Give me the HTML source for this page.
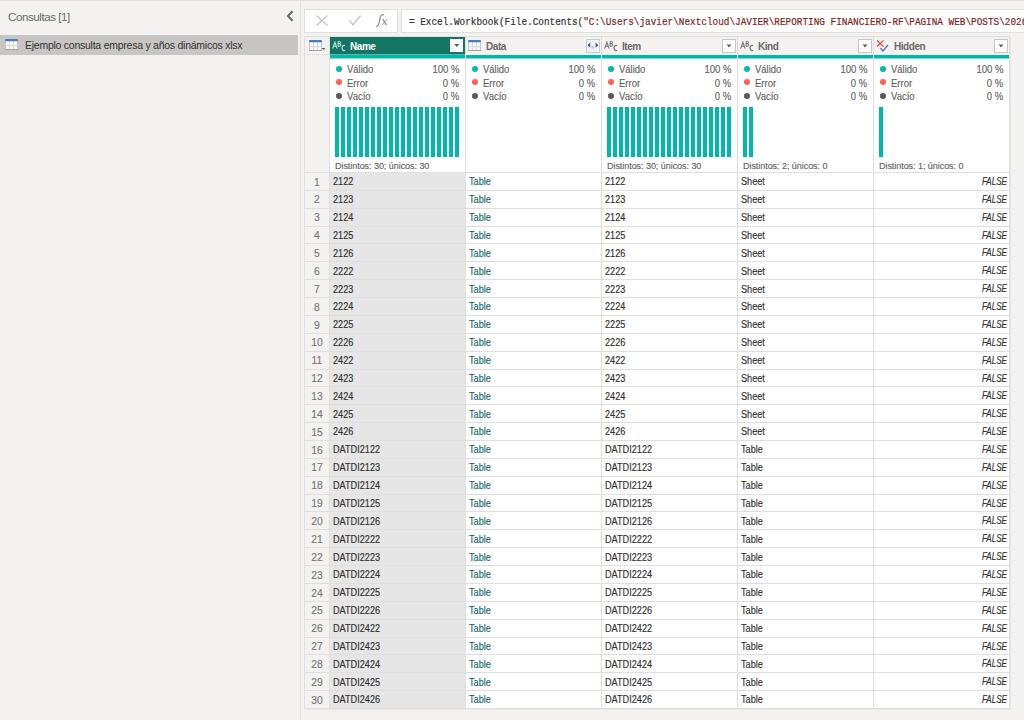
<!DOCTYPE html><html><head><meta charset="utf-8"><style>
*{margin:0;padding:0;box-sizing:border-box}
svg{display:block}
html,body{width:1024px;height:720px;overflow:hidden;background:#f3f2f1;font-family:"Liberation Sans",sans-serif;position:relative}
.a{position:absolute}
.t{position:absolute;white-space:nowrap;line-height:1}
.dd{position:absolute;top:39px;width:14px;height:14px;border:1px solid #c8c6c4;background:#fff}
.hdr{position:absolute;top:37px;height:18px;background:#f3f2f1}
.htxt{position:absolute;top:42px;font-size:10px;font-weight:bold;color:#6b6967;letter-spacing:-0.45px;line-height:1;white-space:nowrap}
.ptxt{position:absolute;font-size:10px;color:#605e5c;-webkit-text-stroke:0.12px currentColor;line-height:1;white-space:nowrap}
.dot{position:absolute;width:6px;height:6px;border-radius:50%}
.bar{position:absolute;top:107px;width:4px;height:50px;background:#01b8aa}
.cell{position:absolute;font-size:10px;line-height:1;white-space:nowrap;color:#323130;-webkit-text-stroke:0.15px currentColor;transform:scaleX(0.915);transform-origin:0 0}
.rn{position:absolute;left:305px;width:24px;text-align:center;font-size:11.5px;line-height:1;color:#797775;-webkit-text-stroke:0.15px currentColor;transform:scaleX(0.9);transform-origin:50% 0}
.fl{position:absolute;font-size:10.3px;line-height:1;white-space:nowrap;color:#323130;-webkit-text-stroke:0.18px currentColor;font-style:italic;transform:scaleX(0.78);transform-origin:100% 0}
</style></head><body>

<div class="a" style="left:0;top:0;width:1024px;height:1px;background:#e1dfdd"></div>
<div class="t" style="left:8px;top:11px;font-size:11.6px;color:#6b6967;letter-spacing:-0.45px">Consultas [1]</div>
<svg class="a" style="left:285px;top:10px" width="10" height="12" viewBox="0 0 10 12"><path d="M7.5 1.2L3 6l4.5 4.8" stroke="#666" stroke-width="2" fill="none"/></svg>
<div class="a" style="left:0;top:35px;width:298px;height:20px;background:#c8c6c4"></div>
<div class="a" style="left:5px;top:39px"><svg width="13" height="11" viewBox="0 0 13 11"><rect x="0.5" y="2" width="12" height="8.5" fill="#f7f7f7"/><path d="M0.5 2v8.5M12.5 2v8.5" stroke="#c6c6c6" stroke-width="1"/><path d="M4.5 2v8.5M8.5 2v8.5M0.5 6.5h12" stroke="#dadada" stroke-width="1"/><path d="M0 10.5h13" stroke="#a0a0a0"/><rect x="0" y="0" width="13" height="2.3" rx="1" fill="#4a7cbf"/></svg></div>
<div class="t" style="left:25px;top:40px;font-size:10.5px;color:#323130;letter-spacing:-0.25px">Ejemplo consulta empresa y años dinámicos xlsx</div>
<div class="a" style="left:300px;top:1px;width:1px;height:719px;background:#e1dfdd"></div>
<div class="a" style="left:304px;top:9px;width:94px;height:24px;background:#fff;border:1px solid #e1dfdd"></div>
<svg class="a" style="left:315px;top:14px" width="14" height="13" viewBox="0 0 14 13"><path d="M1.5 1.5l11 10M12.5 1.5l-11 10" stroke="#c8c6c4" stroke-width="1.3"/></svg>
<svg class="a" style="left:348px;top:14px" width="14" height="13" viewBox="0 0 14 13"><path d="M1.5 6.5l3.5 4.5 7.5-9.5" stroke="#c8c6c4" stroke-width="1.3" fill="none"/></svg>
<svg class="a" style="left:370px;top:10px" width="24" height="20" viewBox="0 0 24 20"><path d="M6.6 16.4C8.4 16.6 9.1 14.2 9.7 10.2C10.3 6.2 11 4.2 13.6 4.6" stroke="#8f8d8b" stroke-width="1.25" fill="none" stroke-linecap="round"/><path d="M13.2 9.6L16.2 14.6" stroke="#8f8d8b" stroke-width="1.3" stroke-linecap="round"/><path d="M16.6 9.2L12.2 14.8" stroke="#9a9896" stroke-width="0.9" stroke-linecap="round"/></svg>
<div class="a" style="left:401px;top:9px;width:640px;height:24px;background:#fff;border:1px solid #e1dfdd"></div>
<div class="t" style="left:408.5px;top:16.9px;-webkit-text-stroke:0.2px #323130;font-family:'Liberation Mono',monospace;font-size:11px;transform:scaleX(0.8515);transform-origin:0 0;color:#323130">= Excel.Workbook(File.Contents(<span style="color:#a31515">"C:\Users\javier\Nextcloud\JAVIER\REPORTING FINANCIERO-RF\PAGINA WEB\POSTS\2026</span></div>
<div class="a" style="left:304px;top:36px;width:706px;height:673px;background:#e1dfdd;box-shadow:1px 1px 0 #e8e6e4"></div>
<div class="a" style="left:305px;top:37px;width:24px;height:135px;background:#f3f2f1"></div>
<div class="a" style="left:305px;top:54px;width:24px;height:1px;background:#e1dfdd"></div>
<div class="a" style="left:309px;top:40px"><svg width="13" height="11" viewBox="0 0 13 11"><rect x="0.5" y="2" width="12" height="8.5" fill="#f7f7f7"/><path d="M0.5 2v8.5M12.5 2v8.5" stroke="#c6c6c6" stroke-width="1"/><path d="M4.5 2v8.5M8.5 2v8.5M0.5 6.5h12" stroke="#dadada" stroke-width="1"/><path d="M0 10.5h13" stroke="#a0a0a0"/><rect x="0" y="0" width="13" height="2.3" rx="1" fill="#4a7cbf"/></svg></div>
<svg class="a" style="left:321px;top:47px" width="5" height="4" viewBox="0 0 5 4"><path d="M0.5 1h4l-2 2z" fill="#605e5c"/></svg>
<div class="hdr" style="left:330px;width:135px;background:#137563"></div>
<div class="a" style="left:330px;top:54px;width:135px;height:1px;background:#62b3a6"></div>
<div class="a" style="left:330px;top:55px;width:135px;height:3px;background:#01b8aa"></div>
<div class="a" style="left:330px;top:58px;width:135px;height:1px;background:#80dbd4"></div>
<div class="a" style="left:330px;top:59px;width:135px;height:113px;background:#fff"></div>
<div class="a" style="left:332px;top:41px"><svg width="14" height="11" viewBox="0 0 14 11"><path d="M0.7 7.7L2.9 1.2L5.1 7.6M1.9 5.2h2" stroke="#cde6df" stroke-width="1.05" fill="none"/><path d="M6.1 5.4V0.4h1.3a1.15 1.15 0 0 1 0 2.3H6.1h1.5a1.3 1.3 0 0 1 0 2.6H6.1" stroke="#cde6df" stroke-width="1" fill="none"/><path d="M13.1 4.7A2.1 2.6 0 1 0 13.1 9.3" stroke="#cde6df" stroke-width="1.15" fill="none"/></svg></div>
<div class="htxt" style="left:350px;color:#fff">Name</div>
<div class="dd" style="left:450px;width:13px;height:13px;border:none"><svg width="13" height="13" viewBox="0 0 13 13" style="position:absolute;left:0;top:0"><path d="M4.2 5h5.2l-2.6 3z" fill="#605e5c"/></svg></div>
<div class="dot" style="left:336.2px;top:65.9px;background:#01b8aa"></div>
<div class="ptxt" style="left:347px;top:64.8px;transform:scaleX(0.95);transform-origin:0 0">Válido</div>
<div class="ptxt" style="right:565px;top:64.8px;transform:scaleX(0.95);transform-origin:100% 0">100 %</div>
<div class="dot" style="left:336.2px;top:79.3px;background:#fd625e"></div>
<div class="ptxt" style="left:347px;top:78.6px;transform:scaleX(0.95);transform-origin:0 0">Error</div>
<div class="ptxt" style="right:565px;top:78.6px;transform:scaleX(0.95);transform-origin:100% 0">0 %</div>
<div class="dot" style="left:336.2px;top:93.0px;background:#595959"></div>
<div class="ptxt" style="left:347px;top:92.4px;transform:scaleX(0.95);transform-origin:0 0">Vacío</div>
<div class="ptxt" style="right:565px;top:92.4px;transform:scaleX(0.95);transform-origin:100% 0">0 %</div>
<div class="bar" style="left:335px"></div>
<div class="bar" style="left:341px"></div>
<div class="bar" style="left:347px"></div>
<div class="bar" style="left:353px"></div>
<div class="bar" style="left:359px"></div>
<div class="bar" style="left:365px"></div>
<div class="bar" style="left:371px"></div>
<div class="bar" style="left:377px"></div>
<div class="bar" style="left:383px"></div>
<div class="bar" style="left:389px"></div>
<div class="bar" style="left:395px"></div>
<div class="bar" style="left:401px"></div>
<div class="bar" style="left:407px"></div>
<div class="bar" style="left:413px"></div>
<div class="bar" style="left:419px"></div>
<div class="bar" style="left:425px"></div>
<div class="bar" style="left:431px"></div>
<div class="bar" style="left:437px"></div>
<div class="bar" style="left:443px"></div>
<div class="bar" style="left:449px"></div>
<div class="bar" style="left:455px"></div>
<div class="ptxt" style="left:335px;top:161.5px;font-size:9px;letter-spacing:-0.05px">Distintos: 30; únicos: 30</div>
<div class="hdr" style="left:466px;width:135px"></div>
<div class="a" style="left:466px;top:55px;width:135px;height:3px;background:#01b8aa"></div>
<div class="a" style="left:466px;top:58px;width:135px;height:1px;background:#80dbd4"></div>
<div class="a" style="left:466px;top:59px;width:135px;height:113px;background:#fff"></div>
<div class="a" style="left:468px;top:40px"><svg width="13" height="11" viewBox="0 0 13 11"><rect x="0.5" y="2" width="12" height="8.5" fill="#f7f7f7"/><path d="M0.5 2v8.5M12.5 2v8.5" stroke="#c6c6c6" stroke-width="1"/><path d="M4.5 2v8.5M8.5 2v8.5M0.5 6.5h12" stroke="#dadada" stroke-width="1"/><path d="M0 10.5h13" stroke="#a0a0a0"/><rect x="0" y="0" width="13" height="2.3" rx="1" fill="#4a7cbf"/></svg></div>
<div class="htxt" style="left:486px;">Data</div>
<div class="dd" style="left:586px;border-color:#c6cbd1;background:#eef3f8"><svg width="12" height="12" viewBox="0 0 12 12" style="position:absolute;left:0;top:0"><path d="M0.5 5.2L3.2 2.6v5.2z M11.3 5.2L8.6 2.6v5.2z" fill="#555"/><rect x="4.4" y="6" width="2.8" height="2.6" fill="#c8c8c8"/></svg></div>
<div class="dot" style="left:472.2px;top:65.9px;background:#01b8aa"></div>
<div class="ptxt" style="left:483px;top:64.8px;transform:scaleX(0.95);transform-origin:0 0">Válido</div>
<div class="ptxt" style="right:429px;top:64.8px;transform:scaleX(0.95);transform-origin:100% 0">100 %</div>
<div class="dot" style="left:472.2px;top:79.3px;background:#fd625e"></div>
<div class="ptxt" style="left:483px;top:78.6px;transform:scaleX(0.95);transform-origin:0 0">Error</div>
<div class="ptxt" style="right:429px;top:78.6px;transform:scaleX(0.95);transform-origin:100% 0">0 %</div>
<div class="dot" style="left:472.2px;top:93.0px;background:#595959"></div>
<div class="ptxt" style="left:483px;top:92.4px;transform:scaleX(0.95);transform-origin:0 0">Vacío</div>
<div class="ptxt" style="right:429px;top:92.4px;transform:scaleX(0.95);transform-origin:100% 0">0 %</div>
<div class="hdr" style="left:602px;width:135px"></div>
<div class="a" style="left:602px;top:55px;width:135px;height:3px;background:#01b8aa"></div>
<div class="a" style="left:602px;top:58px;width:135px;height:1px;background:#80dbd4"></div>
<div class="a" style="left:602px;top:59px;width:135px;height:113px;background:#fff"></div>
<div class="a" style="left:604px;top:41px"><svg width="14" height="11" viewBox="0 0 14 11"><path d="M0.7 7.7L2.9 1.2L5.1 7.6M1.9 5.2h2" stroke="#707070" stroke-width="1.05" fill="none"/><path d="M6.1 5.4V0.4h1.3a1.15 1.15 0 0 1 0 2.3H6.1h1.5a1.3 1.3 0 0 1 0 2.6H6.1" stroke="#707070" stroke-width="1" fill="none"/><path d="M13.1 4.7A2.1 2.6 0 1 0 13.1 9.3" stroke="#707070" stroke-width="1.15" fill="none"/></svg></div>
<div class="htxt" style="left:622px;">Item</div>
<div class="dd" style="left:722px;border-color:#c8c6c4"><svg width="12" height="12" viewBox="0 0 12 12" style="position:absolute;left:0;top:0"><path d="M3.5 4.5h5l-2.5 3z" fill="#605e5c"/></svg></div>
<div class="dot" style="left:608.2px;top:65.9px;background:#01b8aa"></div>
<div class="ptxt" style="left:619px;top:64.8px;transform:scaleX(0.95);transform-origin:0 0">Válido</div>
<div class="ptxt" style="right:293px;top:64.8px;transform:scaleX(0.95);transform-origin:100% 0">100 %</div>
<div class="dot" style="left:608.2px;top:79.3px;background:#fd625e"></div>
<div class="ptxt" style="left:619px;top:78.6px;transform:scaleX(0.95);transform-origin:0 0">Error</div>
<div class="ptxt" style="right:293px;top:78.6px;transform:scaleX(0.95);transform-origin:100% 0">0 %</div>
<div class="dot" style="left:608.2px;top:93.0px;background:#595959"></div>
<div class="ptxt" style="left:619px;top:92.4px;transform:scaleX(0.95);transform-origin:0 0">Vacío</div>
<div class="ptxt" style="right:293px;top:92.4px;transform:scaleX(0.95);transform-origin:100% 0">0 %</div>
<div class="bar" style="left:607px"></div>
<div class="bar" style="left:613px"></div>
<div class="bar" style="left:619px"></div>
<div class="bar" style="left:625px"></div>
<div class="bar" style="left:631px"></div>
<div class="bar" style="left:637px"></div>
<div class="bar" style="left:643px"></div>
<div class="bar" style="left:649px"></div>
<div class="bar" style="left:655px"></div>
<div class="bar" style="left:661px"></div>
<div class="bar" style="left:667px"></div>
<div class="bar" style="left:673px"></div>
<div class="bar" style="left:679px"></div>
<div class="bar" style="left:685px"></div>
<div class="bar" style="left:691px"></div>
<div class="bar" style="left:697px"></div>
<div class="bar" style="left:703px"></div>
<div class="bar" style="left:709px"></div>
<div class="bar" style="left:715px"></div>
<div class="bar" style="left:721px"></div>
<div class="bar" style="left:727px"></div>
<div class="ptxt" style="left:607px;top:161.5px;font-size:9px;letter-spacing:-0.05px">Distintos: 30; únicos: 30</div>
<div class="hdr" style="left:738px;width:135px"></div>
<div class="a" style="left:738px;top:55px;width:135px;height:3px;background:#01b8aa"></div>
<div class="a" style="left:738px;top:58px;width:135px;height:1px;background:#80dbd4"></div>
<div class="a" style="left:738px;top:59px;width:135px;height:113px;background:#fff"></div>
<div class="a" style="left:740px;top:41px"><svg width="14" height="11" viewBox="0 0 14 11"><path d="M0.7 7.7L2.9 1.2L5.1 7.6M1.9 5.2h2" stroke="#707070" stroke-width="1.05" fill="none"/><path d="M6.1 5.4V0.4h1.3a1.15 1.15 0 0 1 0 2.3H6.1h1.5a1.3 1.3 0 0 1 0 2.6H6.1" stroke="#707070" stroke-width="1" fill="none"/><path d="M13.1 4.7A2.1 2.6 0 1 0 13.1 9.3" stroke="#707070" stroke-width="1.15" fill="none"/></svg></div>
<div class="htxt" style="left:758px;">Kind</div>
<div class="dd" style="left:858px;border-color:#c8c6c4"><svg width="12" height="12" viewBox="0 0 12 12" style="position:absolute;left:0;top:0"><path d="M3.5 4.5h5l-2.5 3z" fill="#605e5c"/></svg></div>
<div class="dot" style="left:744.2px;top:65.9px;background:#01b8aa"></div>
<div class="ptxt" style="left:755px;top:64.8px;transform:scaleX(0.95);transform-origin:0 0">Válido</div>
<div class="ptxt" style="right:157px;top:64.8px;transform:scaleX(0.95);transform-origin:100% 0">100 %</div>
<div class="dot" style="left:744.2px;top:79.3px;background:#fd625e"></div>
<div class="ptxt" style="left:755px;top:78.6px;transform:scaleX(0.95);transform-origin:0 0">Error</div>
<div class="ptxt" style="right:157px;top:78.6px;transform:scaleX(0.95);transform-origin:100% 0">0 %</div>
<div class="dot" style="left:744.2px;top:93.0px;background:#595959"></div>
<div class="ptxt" style="left:755px;top:92.4px;transform:scaleX(0.95);transform-origin:0 0">Vacío</div>
<div class="ptxt" style="right:157px;top:92.4px;transform:scaleX(0.95);transform-origin:100% 0">0 %</div>
<div class="bar" style="left:743px"></div>
<div class="bar" style="left:749px"></div>
<div class="ptxt" style="left:743px;top:161.5px;font-size:9px;letter-spacing:-0.05px">Distintos: 2; únicos: 0</div>
<div class="hdr" style="left:874px;width:135px"></div>
<div class="a" style="left:874px;top:55px;width:135px;height:3px;background:#01b8aa"></div>
<div class="a" style="left:874px;top:58px;width:135px;height:1px;background:#80dbd4"></div>
<div class="a" style="left:874px;top:59px;width:135px;height:113px;background:#fff"></div>
<div class="a" style="left:876px;top:40px"><svg width="13" height="12" viewBox="0 0 13 12"><path d="M1 0.5l6.5 6M7.5 0.5l-6.5 6" stroke="#d9573a" stroke-width="1.3"/><path d="M4.5 8l2.5 3 5-6" stroke="#4a7dbf" stroke-width="1.4" fill="none"/></svg></div>
<div class="htxt" style="left:894px;">Hidden</div>
<div class="dd" style="left:994px;border-color:#c8c6c4"><svg width="12" height="12" viewBox="0 0 12 12" style="position:absolute;left:0;top:0"><path d="M3.5 4.5h5l-2.5 3z" fill="#605e5c"/></svg></div>
<div class="dot" style="left:880.2px;top:65.9px;background:#01b8aa"></div>
<div class="ptxt" style="left:891px;top:64.8px;transform:scaleX(0.95);transform-origin:0 0">Válido</div>
<div class="ptxt" style="right:21px;top:64.8px;transform:scaleX(0.95);transform-origin:100% 0">100 %</div>
<div class="dot" style="left:880.2px;top:79.3px;background:#fd625e"></div>
<div class="ptxt" style="left:891px;top:78.6px;transform:scaleX(0.95);transform-origin:0 0">Error</div>
<div class="ptxt" style="right:21px;top:78.6px;transform:scaleX(0.95);transform-origin:100% 0">0 %</div>
<div class="dot" style="left:880.2px;top:93.0px;background:#595959"></div>
<div class="ptxt" style="left:891px;top:92.4px;transform:scaleX(0.95);transform-origin:0 0">Vacío</div>
<div class="ptxt" style="right:21px;top:92.4px;transform:scaleX(0.95);transform-origin:100% 0">0 %</div>
<div class="bar" style="left:879px"></div>
<div class="ptxt" style="left:879px;top:161.5px;font-size:9px;letter-spacing:-0.05px">Distintos: 1; únicos: 0</div>
<div class="a" style="left:305px;top:173.00px;width:24px;height:16.87px;background:#f3f2f1"></div>
<div class="rn" style="top:176.60px">1</div>
<div class="a" style="left:330px;top:173.00px;width:135px;height:16.87px;background:#e6e6e6"></div>
<div class="cell" style="left:333px;top:177.30px">2122</div>
<div class="a" style="left:466px;top:173.00px;width:135px;height:16.87px;background:#fff"></div>
<div class="cell" style="left:469px;top:177.30px;color:#17676b">Table</div>
<div class="a" style="left:602px;top:173.00px;width:135px;height:16.87px;background:#fff"></div>
<div class="cell" style="left:605px;top:177.30px">2122</div>
<div class="a" style="left:738px;top:173.00px;width:135px;height:16.87px;background:#fff"></div>
<div class="cell" style="left:741px;top:177.30px">Sheet</div>
<div class="a" style="left:874px;top:173.00px;width:135px;height:16.87px;background:#fff"></div>
<div class="fl" style="right:17px;top:177.00px">FALSE</div>
<div class="a" style="left:305px;top:190.87px;width:24px;height:16.87px;background:#f3f2f1"></div>
<div class="rn" style="top:194.47px">2</div>
<div class="a" style="left:330px;top:190.87px;width:135px;height:16.87px;background:#e6e6e6"></div>
<div class="cell" style="left:333px;top:195.17px">2123</div>
<div class="a" style="left:466px;top:190.87px;width:135px;height:16.87px;background:#fff"></div>
<div class="cell" style="left:469px;top:195.17px;color:#17676b">Table</div>
<div class="a" style="left:602px;top:190.87px;width:135px;height:16.87px;background:#fff"></div>
<div class="cell" style="left:605px;top:195.17px">2123</div>
<div class="a" style="left:738px;top:190.87px;width:135px;height:16.87px;background:#fff"></div>
<div class="cell" style="left:741px;top:195.17px">Sheet</div>
<div class="a" style="left:874px;top:190.87px;width:135px;height:16.87px;background:#fff"></div>
<div class="fl" style="right:17px;top:194.87px">FALSE</div>
<div class="a" style="left:305px;top:208.73px;width:24px;height:16.87px;background:#f3f2f1"></div>
<div class="rn" style="top:212.33px">3</div>
<div class="a" style="left:330px;top:208.73px;width:135px;height:16.87px;background:#e6e6e6"></div>
<div class="cell" style="left:333px;top:213.03px">2124</div>
<div class="a" style="left:466px;top:208.73px;width:135px;height:16.87px;background:#fff"></div>
<div class="cell" style="left:469px;top:213.03px;color:#17676b">Table</div>
<div class="a" style="left:602px;top:208.73px;width:135px;height:16.87px;background:#fff"></div>
<div class="cell" style="left:605px;top:213.03px">2124</div>
<div class="a" style="left:738px;top:208.73px;width:135px;height:16.87px;background:#fff"></div>
<div class="cell" style="left:741px;top:213.03px">Sheet</div>
<div class="a" style="left:874px;top:208.73px;width:135px;height:16.87px;background:#fff"></div>
<div class="fl" style="right:17px;top:212.73px">FALSE</div>
<div class="a" style="left:305px;top:226.60px;width:24px;height:16.87px;background:#f3f2f1"></div>
<div class="rn" style="top:230.20px">4</div>
<div class="a" style="left:330px;top:226.60px;width:135px;height:16.87px;background:#e6e6e6"></div>
<div class="cell" style="left:333px;top:230.90px">2125</div>
<div class="a" style="left:466px;top:226.60px;width:135px;height:16.87px;background:#fff"></div>
<div class="cell" style="left:469px;top:230.90px;color:#17676b">Table</div>
<div class="a" style="left:602px;top:226.60px;width:135px;height:16.87px;background:#fff"></div>
<div class="cell" style="left:605px;top:230.90px">2125</div>
<div class="a" style="left:738px;top:226.60px;width:135px;height:16.87px;background:#fff"></div>
<div class="cell" style="left:741px;top:230.90px">Sheet</div>
<div class="a" style="left:874px;top:226.60px;width:135px;height:16.87px;background:#fff"></div>
<div class="fl" style="right:17px;top:230.60px">FALSE</div>
<div class="a" style="left:305px;top:244.47px;width:24px;height:16.87px;background:#f3f2f1"></div>
<div class="rn" style="top:248.07px">5</div>
<div class="a" style="left:330px;top:244.47px;width:135px;height:16.87px;background:#e6e6e6"></div>
<div class="cell" style="left:333px;top:248.77px">2126</div>
<div class="a" style="left:466px;top:244.47px;width:135px;height:16.87px;background:#fff"></div>
<div class="cell" style="left:469px;top:248.77px;color:#17676b">Table</div>
<div class="a" style="left:602px;top:244.47px;width:135px;height:16.87px;background:#fff"></div>
<div class="cell" style="left:605px;top:248.77px">2126</div>
<div class="a" style="left:738px;top:244.47px;width:135px;height:16.87px;background:#fff"></div>
<div class="cell" style="left:741px;top:248.77px">Sheet</div>
<div class="a" style="left:874px;top:244.47px;width:135px;height:16.87px;background:#fff"></div>
<div class="fl" style="right:17px;top:248.47px">FALSE</div>
<div class="a" style="left:305px;top:262.33px;width:24px;height:16.87px;background:#f3f2f1"></div>
<div class="rn" style="top:265.93px">6</div>
<div class="a" style="left:330px;top:262.33px;width:135px;height:16.87px;background:#e6e6e6"></div>
<div class="cell" style="left:333px;top:266.63px">2222</div>
<div class="a" style="left:466px;top:262.33px;width:135px;height:16.87px;background:#fff"></div>
<div class="cell" style="left:469px;top:266.63px;color:#17676b">Table</div>
<div class="a" style="left:602px;top:262.33px;width:135px;height:16.87px;background:#fff"></div>
<div class="cell" style="left:605px;top:266.63px">2222</div>
<div class="a" style="left:738px;top:262.33px;width:135px;height:16.87px;background:#fff"></div>
<div class="cell" style="left:741px;top:266.63px">Sheet</div>
<div class="a" style="left:874px;top:262.33px;width:135px;height:16.87px;background:#fff"></div>
<div class="fl" style="right:17px;top:266.33px">FALSE</div>
<div class="a" style="left:305px;top:280.20px;width:24px;height:16.87px;background:#f3f2f1"></div>
<div class="rn" style="top:283.80px">7</div>
<div class="a" style="left:330px;top:280.20px;width:135px;height:16.87px;background:#e6e6e6"></div>
<div class="cell" style="left:333px;top:284.50px">2223</div>
<div class="a" style="left:466px;top:280.20px;width:135px;height:16.87px;background:#fff"></div>
<div class="cell" style="left:469px;top:284.50px;color:#17676b">Table</div>
<div class="a" style="left:602px;top:280.20px;width:135px;height:16.87px;background:#fff"></div>
<div class="cell" style="left:605px;top:284.50px">2223</div>
<div class="a" style="left:738px;top:280.20px;width:135px;height:16.87px;background:#fff"></div>
<div class="cell" style="left:741px;top:284.50px">Sheet</div>
<div class="a" style="left:874px;top:280.20px;width:135px;height:16.87px;background:#fff"></div>
<div class="fl" style="right:17px;top:284.20px">FALSE</div>
<div class="a" style="left:305px;top:298.07px;width:24px;height:16.87px;background:#f3f2f1"></div>
<div class="rn" style="top:301.67px">8</div>
<div class="a" style="left:330px;top:298.07px;width:135px;height:16.87px;background:#e6e6e6"></div>
<div class="cell" style="left:333px;top:302.37px">2224</div>
<div class="a" style="left:466px;top:298.07px;width:135px;height:16.87px;background:#fff"></div>
<div class="cell" style="left:469px;top:302.37px;color:#17676b">Table</div>
<div class="a" style="left:602px;top:298.07px;width:135px;height:16.87px;background:#fff"></div>
<div class="cell" style="left:605px;top:302.37px">2224</div>
<div class="a" style="left:738px;top:298.07px;width:135px;height:16.87px;background:#fff"></div>
<div class="cell" style="left:741px;top:302.37px">Sheet</div>
<div class="a" style="left:874px;top:298.07px;width:135px;height:16.87px;background:#fff"></div>
<div class="fl" style="right:17px;top:302.07px">FALSE</div>
<div class="a" style="left:305px;top:315.93px;width:24px;height:16.87px;background:#f3f2f1"></div>
<div class="rn" style="top:319.53px">9</div>
<div class="a" style="left:330px;top:315.93px;width:135px;height:16.87px;background:#e6e6e6"></div>
<div class="cell" style="left:333px;top:320.23px">2225</div>
<div class="a" style="left:466px;top:315.93px;width:135px;height:16.87px;background:#fff"></div>
<div class="cell" style="left:469px;top:320.23px;color:#17676b">Table</div>
<div class="a" style="left:602px;top:315.93px;width:135px;height:16.87px;background:#fff"></div>
<div class="cell" style="left:605px;top:320.23px">2225</div>
<div class="a" style="left:738px;top:315.93px;width:135px;height:16.87px;background:#fff"></div>
<div class="cell" style="left:741px;top:320.23px">Sheet</div>
<div class="a" style="left:874px;top:315.93px;width:135px;height:16.87px;background:#fff"></div>
<div class="fl" style="right:17px;top:319.93px">FALSE</div>
<div class="a" style="left:305px;top:333.80px;width:24px;height:16.87px;background:#f3f2f1"></div>
<div class="rn" style="top:337.40px">10</div>
<div class="a" style="left:330px;top:333.80px;width:135px;height:16.87px;background:#e6e6e6"></div>
<div class="cell" style="left:333px;top:338.10px">2226</div>
<div class="a" style="left:466px;top:333.80px;width:135px;height:16.87px;background:#fff"></div>
<div class="cell" style="left:469px;top:338.10px;color:#17676b">Table</div>
<div class="a" style="left:602px;top:333.80px;width:135px;height:16.87px;background:#fff"></div>
<div class="cell" style="left:605px;top:338.10px">2226</div>
<div class="a" style="left:738px;top:333.80px;width:135px;height:16.87px;background:#fff"></div>
<div class="cell" style="left:741px;top:338.10px">Sheet</div>
<div class="a" style="left:874px;top:333.80px;width:135px;height:16.87px;background:#fff"></div>
<div class="fl" style="right:17px;top:337.80px">FALSE</div>
<div class="a" style="left:305px;top:351.67px;width:24px;height:16.87px;background:#f3f2f1"></div>
<div class="rn" style="top:355.27px">11</div>
<div class="a" style="left:330px;top:351.67px;width:135px;height:16.87px;background:#e6e6e6"></div>
<div class="cell" style="left:333px;top:355.97px">2422</div>
<div class="a" style="left:466px;top:351.67px;width:135px;height:16.87px;background:#fff"></div>
<div class="cell" style="left:469px;top:355.97px;color:#17676b">Table</div>
<div class="a" style="left:602px;top:351.67px;width:135px;height:16.87px;background:#fff"></div>
<div class="cell" style="left:605px;top:355.97px">2422</div>
<div class="a" style="left:738px;top:351.67px;width:135px;height:16.87px;background:#fff"></div>
<div class="cell" style="left:741px;top:355.97px">Sheet</div>
<div class="a" style="left:874px;top:351.67px;width:135px;height:16.87px;background:#fff"></div>
<div class="fl" style="right:17px;top:355.67px">FALSE</div>
<div class="a" style="left:305px;top:369.53px;width:24px;height:16.87px;background:#f3f2f1"></div>
<div class="rn" style="top:373.13px">12</div>
<div class="a" style="left:330px;top:369.53px;width:135px;height:16.87px;background:#e6e6e6"></div>
<div class="cell" style="left:333px;top:373.83px">2423</div>
<div class="a" style="left:466px;top:369.53px;width:135px;height:16.87px;background:#fff"></div>
<div class="cell" style="left:469px;top:373.83px;color:#17676b">Table</div>
<div class="a" style="left:602px;top:369.53px;width:135px;height:16.87px;background:#fff"></div>
<div class="cell" style="left:605px;top:373.83px">2423</div>
<div class="a" style="left:738px;top:369.53px;width:135px;height:16.87px;background:#fff"></div>
<div class="cell" style="left:741px;top:373.83px">Sheet</div>
<div class="a" style="left:874px;top:369.53px;width:135px;height:16.87px;background:#fff"></div>
<div class="fl" style="right:17px;top:373.53px">FALSE</div>
<div class="a" style="left:305px;top:387.40px;width:24px;height:16.87px;background:#f3f2f1"></div>
<div class="rn" style="top:391.00px">13</div>
<div class="a" style="left:330px;top:387.40px;width:135px;height:16.87px;background:#e6e6e6"></div>
<div class="cell" style="left:333px;top:391.70px">2424</div>
<div class="a" style="left:466px;top:387.40px;width:135px;height:16.87px;background:#fff"></div>
<div class="cell" style="left:469px;top:391.70px;color:#17676b">Table</div>
<div class="a" style="left:602px;top:387.40px;width:135px;height:16.87px;background:#fff"></div>
<div class="cell" style="left:605px;top:391.70px">2424</div>
<div class="a" style="left:738px;top:387.40px;width:135px;height:16.87px;background:#fff"></div>
<div class="cell" style="left:741px;top:391.70px">Sheet</div>
<div class="a" style="left:874px;top:387.40px;width:135px;height:16.87px;background:#fff"></div>
<div class="fl" style="right:17px;top:391.40px">FALSE</div>
<div class="a" style="left:305px;top:405.27px;width:24px;height:16.87px;background:#f3f2f1"></div>
<div class="rn" style="top:408.87px">14</div>
<div class="a" style="left:330px;top:405.27px;width:135px;height:16.87px;background:#e6e6e6"></div>
<div class="cell" style="left:333px;top:409.57px">2425</div>
<div class="a" style="left:466px;top:405.27px;width:135px;height:16.87px;background:#fff"></div>
<div class="cell" style="left:469px;top:409.57px;color:#17676b">Table</div>
<div class="a" style="left:602px;top:405.27px;width:135px;height:16.87px;background:#fff"></div>
<div class="cell" style="left:605px;top:409.57px">2425</div>
<div class="a" style="left:738px;top:405.27px;width:135px;height:16.87px;background:#fff"></div>
<div class="cell" style="left:741px;top:409.57px">Sheet</div>
<div class="a" style="left:874px;top:405.27px;width:135px;height:16.87px;background:#fff"></div>
<div class="fl" style="right:17px;top:409.27px">FALSE</div>
<div class="a" style="left:305px;top:423.13px;width:24px;height:16.87px;background:#f3f2f1"></div>
<div class="rn" style="top:426.73px">15</div>
<div class="a" style="left:330px;top:423.13px;width:135px;height:16.87px;background:#e6e6e6"></div>
<div class="cell" style="left:333px;top:427.43px">2426</div>
<div class="a" style="left:466px;top:423.13px;width:135px;height:16.87px;background:#fff"></div>
<div class="cell" style="left:469px;top:427.43px;color:#17676b">Table</div>
<div class="a" style="left:602px;top:423.13px;width:135px;height:16.87px;background:#fff"></div>
<div class="cell" style="left:605px;top:427.43px">2426</div>
<div class="a" style="left:738px;top:423.13px;width:135px;height:16.87px;background:#fff"></div>
<div class="cell" style="left:741px;top:427.43px">Sheet</div>
<div class="a" style="left:874px;top:423.13px;width:135px;height:16.87px;background:#fff"></div>
<div class="fl" style="right:17px;top:427.13px">FALSE</div>
<div class="a" style="left:305px;top:441.00px;width:24px;height:16.87px;background:#f3f2f1"></div>
<div class="rn" style="top:444.60px">16</div>
<div class="a" style="left:330px;top:441.00px;width:135px;height:16.87px;background:#e6e6e6"></div>
<div class="cell" style="left:333px;top:445.30px">DATDI2122</div>
<div class="a" style="left:466px;top:441.00px;width:135px;height:16.87px;background:#fff"></div>
<div class="cell" style="left:469px;top:445.30px;color:#17676b">Table</div>
<div class="a" style="left:602px;top:441.00px;width:135px;height:16.87px;background:#fff"></div>
<div class="cell" style="left:605px;top:445.30px">DATDI2122</div>
<div class="a" style="left:738px;top:441.00px;width:135px;height:16.87px;background:#fff"></div>
<div class="cell" style="left:741px;top:445.30px">Table</div>
<div class="a" style="left:874px;top:441.00px;width:135px;height:16.87px;background:#fff"></div>
<div class="fl" style="right:17px;top:445.00px">FALSE</div>
<div class="a" style="left:305px;top:458.87px;width:24px;height:16.87px;background:#f3f2f1"></div>
<div class="rn" style="top:462.47px">17</div>
<div class="a" style="left:330px;top:458.87px;width:135px;height:16.87px;background:#e6e6e6"></div>
<div class="cell" style="left:333px;top:463.17px">DATDI2123</div>
<div class="a" style="left:466px;top:458.87px;width:135px;height:16.87px;background:#fff"></div>
<div class="cell" style="left:469px;top:463.17px;color:#17676b">Table</div>
<div class="a" style="left:602px;top:458.87px;width:135px;height:16.87px;background:#fff"></div>
<div class="cell" style="left:605px;top:463.17px">DATDI2123</div>
<div class="a" style="left:738px;top:458.87px;width:135px;height:16.87px;background:#fff"></div>
<div class="cell" style="left:741px;top:463.17px">Table</div>
<div class="a" style="left:874px;top:458.87px;width:135px;height:16.87px;background:#fff"></div>
<div class="fl" style="right:17px;top:462.87px">FALSE</div>
<div class="a" style="left:305px;top:476.73px;width:24px;height:16.87px;background:#f3f2f1"></div>
<div class="rn" style="top:480.33px">18</div>
<div class="a" style="left:330px;top:476.73px;width:135px;height:16.87px;background:#e6e6e6"></div>
<div class="cell" style="left:333px;top:481.03px">DATDI2124</div>
<div class="a" style="left:466px;top:476.73px;width:135px;height:16.87px;background:#fff"></div>
<div class="cell" style="left:469px;top:481.03px;color:#17676b">Table</div>
<div class="a" style="left:602px;top:476.73px;width:135px;height:16.87px;background:#fff"></div>
<div class="cell" style="left:605px;top:481.03px">DATDI2124</div>
<div class="a" style="left:738px;top:476.73px;width:135px;height:16.87px;background:#fff"></div>
<div class="cell" style="left:741px;top:481.03px">Table</div>
<div class="a" style="left:874px;top:476.73px;width:135px;height:16.87px;background:#fff"></div>
<div class="fl" style="right:17px;top:480.73px">FALSE</div>
<div class="a" style="left:305px;top:494.60px;width:24px;height:16.87px;background:#f3f2f1"></div>
<div class="rn" style="top:498.20px">19</div>
<div class="a" style="left:330px;top:494.60px;width:135px;height:16.87px;background:#e6e6e6"></div>
<div class="cell" style="left:333px;top:498.90px">DATDI2125</div>
<div class="a" style="left:466px;top:494.60px;width:135px;height:16.87px;background:#fff"></div>
<div class="cell" style="left:469px;top:498.90px;color:#17676b">Table</div>
<div class="a" style="left:602px;top:494.60px;width:135px;height:16.87px;background:#fff"></div>
<div class="cell" style="left:605px;top:498.90px">DATDI2125</div>
<div class="a" style="left:738px;top:494.60px;width:135px;height:16.87px;background:#fff"></div>
<div class="cell" style="left:741px;top:498.90px">Table</div>
<div class="a" style="left:874px;top:494.60px;width:135px;height:16.87px;background:#fff"></div>
<div class="fl" style="right:17px;top:498.60px">FALSE</div>
<div class="a" style="left:305px;top:512.47px;width:24px;height:16.87px;background:#f3f2f1"></div>
<div class="rn" style="top:516.07px">20</div>
<div class="a" style="left:330px;top:512.47px;width:135px;height:16.87px;background:#e6e6e6"></div>
<div class="cell" style="left:333px;top:516.77px">DATDI2126</div>
<div class="a" style="left:466px;top:512.47px;width:135px;height:16.87px;background:#fff"></div>
<div class="cell" style="left:469px;top:516.77px;color:#17676b">Table</div>
<div class="a" style="left:602px;top:512.47px;width:135px;height:16.87px;background:#fff"></div>
<div class="cell" style="left:605px;top:516.77px">DATDI2126</div>
<div class="a" style="left:738px;top:512.47px;width:135px;height:16.87px;background:#fff"></div>
<div class="cell" style="left:741px;top:516.77px">Table</div>
<div class="a" style="left:874px;top:512.47px;width:135px;height:16.87px;background:#fff"></div>
<div class="fl" style="right:17px;top:516.47px">FALSE</div>
<div class="a" style="left:305px;top:530.33px;width:24px;height:16.87px;background:#f3f2f1"></div>
<div class="rn" style="top:533.93px">21</div>
<div class="a" style="left:330px;top:530.33px;width:135px;height:16.87px;background:#e6e6e6"></div>
<div class="cell" style="left:333px;top:534.63px">DATDI2222</div>
<div class="a" style="left:466px;top:530.33px;width:135px;height:16.87px;background:#fff"></div>
<div class="cell" style="left:469px;top:534.63px;color:#17676b">Table</div>
<div class="a" style="left:602px;top:530.33px;width:135px;height:16.87px;background:#fff"></div>
<div class="cell" style="left:605px;top:534.63px">DATDI2222</div>
<div class="a" style="left:738px;top:530.33px;width:135px;height:16.87px;background:#fff"></div>
<div class="cell" style="left:741px;top:534.63px">Table</div>
<div class="a" style="left:874px;top:530.33px;width:135px;height:16.87px;background:#fff"></div>
<div class="fl" style="right:17px;top:534.33px">FALSE</div>
<div class="a" style="left:305px;top:548.20px;width:24px;height:16.87px;background:#f3f2f1"></div>
<div class="rn" style="top:551.80px">22</div>
<div class="a" style="left:330px;top:548.20px;width:135px;height:16.87px;background:#e6e6e6"></div>
<div class="cell" style="left:333px;top:552.50px">DATDI2223</div>
<div class="a" style="left:466px;top:548.20px;width:135px;height:16.87px;background:#fff"></div>
<div class="cell" style="left:469px;top:552.50px;color:#17676b">Table</div>
<div class="a" style="left:602px;top:548.20px;width:135px;height:16.87px;background:#fff"></div>
<div class="cell" style="left:605px;top:552.50px">DATDI2223</div>
<div class="a" style="left:738px;top:548.20px;width:135px;height:16.87px;background:#fff"></div>
<div class="cell" style="left:741px;top:552.50px">Table</div>
<div class="a" style="left:874px;top:548.20px;width:135px;height:16.87px;background:#fff"></div>
<div class="fl" style="right:17px;top:552.20px">FALSE</div>
<div class="a" style="left:305px;top:566.07px;width:24px;height:16.87px;background:#f3f2f1"></div>
<div class="rn" style="top:569.67px">23</div>
<div class="a" style="left:330px;top:566.07px;width:135px;height:16.87px;background:#e6e6e6"></div>
<div class="cell" style="left:333px;top:570.37px">DATDI2224</div>
<div class="a" style="left:466px;top:566.07px;width:135px;height:16.87px;background:#fff"></div>
<div class="cell" style="left:469px;top:570.37px;color:#17676b">Table</div>
<div class="a" style="left:602px;top:566.07px;width:135px;height:16.87px;background:#fff"></div>
<div class="cell" style="left:605px;top:570.37px">DATDI2224</div>
<div class="a" style="left:738px;top:566.07px;width:135px;height:16.87px;background:#fff"></div>
<div class="cell" style="left:741px;top:570.37px">Table</div>
<div class="a" style="left:874px;top:566.07px;width:135px;height:16.87px;background:#fff"></div>
<div class="fl" style="right:17px;top:570.07px">FALSE</div>
<div class="a" style="left:305px;top:583.93px;width:24px;height:16.87px;background:#f3f2f1"></div>
<div class="rn" style="top:587.53px">24</div>
<div class="a" style="left:330px;top:583.93px;width:135px;height:16.87px;background:#e6e6e6"></div>
<div class="cell" style="left:333px;top:588.23px">DATDI2225</div>
<div class="a" style="left:466px;top:583.93px;width:135px;height:16.87px;background:#fff"></div>
<div class="cell" style="left:469px;top:588.23px;color:#17676b">Table</div>
<div class="a" style="left:602px;top:583.93px;width:135px;height:16.87px;background:#fff"></div>
<div class="cell" style="left:605px;top:588.23px">DATDI2225</div>
<div class="a" style="left:738px;top:583.93px;width:135px;height:16.87px;background:#fff"></div>
<div class="cell" style="left:741px;top:588.23px">Table</div>
<div class="a" style="left:874px;top:583.93px;width:135px;height:16.87px;background:#fff"></div>
<div class="fl" style="right:17px;top:587.93px">FALSE</div>
<div class="a" style="left:305px;top:601.80px;width:24px;height:16.87px;background:#f3f2f1"></div>
<div class="rn" style="top:605.40px">25</div>
<div class="a" style="left:330px;top:601.80px;width:135px;height:16.87px;background:#e6e6e6"></div>
<div class="cell" style="left:333px;top:606.10px">DATDI2226</div>
<div class="a" style="left:466px;top:601.80px;width:135px;height:16.87px;background:#fff"></div>
<div class="cell" style="left:469px;top:606.10px;color:#17676b">Table</div>
<div class="a" style="left:602px;top:601.80px;width:135px;height:16.87px;background:#fff"></div>
<div class="cell" style="left:605px;top:606.10px">DATDI2226</div>
<div class="a" style="left:738px;top:601.80px;width:135px;height:16.87px;background:#fff"></div>
<div class="cell" style="left:741px;top:606.10px">Table</div>
<div class="a" style="left:874px;top:601.80px;width:135px;height:16.87px;background:#fff"></div>
<div class="fl" style="right:17px;top:605.80px">FALSE</div>
<div class="a" style="left:305px;top:619.67px;width:24px;height:16.87px;background:#f3f2f1"></div>
<div class="rn" style="top:623.27px">26</div>
<div class="a" style="left:330px;top:619.67px;width:135px;height:16.87px;background:#e6e6e6"></div>
<div class="cell" style="left:333px;top:623.97px">DATDI2422</div>
<div class="a" style="left:466px;top:619.67px;width:135px;height:16.87px;background:#fff"></div>
<div class="cell" style="left:469px;top:623.97px;color:#17676b">Table</div>
<div class="a" style="left:602px;top:619.67px;width:135px;height:16.87px;background:#fff"></div>
<div class="cell" style="left:605px;top:623.97px">DATDI2422</div>
<div class="a" style="left:738px;top:619.67px;width:135px;height:16.87px;background:#fff"></div>
<div class="cell" style="left:741px;top:623.97px">Table</div>
<div class="a" style="left:874px;top:619.67px;width:135px;height:16.87px;background:#fff"></div>
<div class="fl" style="right:17px;top:623.67px">FALSE</div>
<div class="a" style="left:305px;top:637.53px;width:24px;height:16.87px;background:#f3f2f1"></div>
<div class="rn" style="top:641.13px">27</div>
<div class="a" style="left:330px;top:637.53px;width:135px;height:16.87px;background:#e6e6e6"></div>
<div class="cell" style="left:333px;top:641.83px">DATDI2423</div>
<div class="a" style="left:466px;top:637.53px;width:135px;height:16.87px;background:#fff"></div>
<div class="cell" style="left:469px;top:641.83px;color:#17676b">Table</div>
<div class="a" style="left:602px;top:637.53px;width:135px;height:16.87px;background:#fff"></div>
<div class="cell" style="left:605px;top:641.83px">DATDI2423</div>
<div class="a" style="left:738px;top:637.53px;width:135px;height:16.87px;background:#fff"></div>
<div class="cell" style="left:741px;top:641.83px">Table</div>
<div class="a" style="left:874px;top:637.53px;width:135px;height:16.87px;background:#fff"></div>
<div class="fl" style="right:17px;top:641.53px">FALSE</div>
<div class="a" style="left:305px;top:655.40px;width:24px;height:16.87px;background:#f3f2f1"></div>
<div class="rn" style="top:659.00px">28</div>
<div class="a" style="left:330px;top:655.40px;width:135px;height:16.87px;background:#e6e6e6"></div>
<div class="cell" style="left:333px;top:659.70px">DATDI2424</div>
<div class="a" style="left:466px;top:655.40px;width:135px;height:16.87px;background:#fff"></div>
<div class="cell" style="left:469px;top:659.70px;color:#17676b">Table</div>
<div class="a" style="left:602px;top:655.40px;width:135px;height:16.87px;background:#fff"></div>
<div class="cell" style="left:605px;top:659.70px">DATDI2424</div>
<div class="a" style="left:738px;top:655.40px;width:135px;height:16.87px;background:#fff"></div>
<div class="cell" style="left:741px;top:659.70px">Table</div>
<div class="a" style="left:874px;top:655.40px;width:135px;height:16.87px;background:#fff"></div>
<div class="fl" style="right:17px;top:659.40px">FALSE</div>
<div class="a" style="left:305px;top:673.27px;width:24px;height:16.87px;background:#f3f2f1"></div>
<div class="rn" style="top:676.87px">29</div>
<div class="a" style="left:330px;top:673.27px;width:135px;height:16.87px;background:#e6e6e6"></div>
<div class="cell" style="left:333px;top:677.57px">DATDI2425</div>
<div class="a" style="left:466px;top:673.27px;width:135px;height:16.87px;background:#fff"></div>
<div class="cell" style="left:469px;top:677.57px;color:#17676b">Table</div>
<div class="a" style="left:602px;top:673.27px;width:135px;height:16.87px;background:#fff"></div>
<div class="cell" style="left:605px;top:677.57px">DATDI2425</div>
<div class="a" style="left:738px;top:673.27px;width:135px;height:16.87px;background:#fff"></div>
<div class="cell" style="left:741px;top:677.57px">Table</div>
<div class="a" style="left:874px;top:673.27px;width:135px;height:16.87px;background:#fff"></div>
<div class="fl" style="right:17px;top:677.27px">FALSE</div>
<div class="a" style="left:305px;top:691.13px;width:24px;height:16.87px;background:#f3f2f1"></div>
<div class="rn" style="top:694.73px">30</div>
<div class="a" style="left:330px;top:691.13px;width:135px;height:16.87px;background:#e6e6e6"></div>
<div class="cell" style="left:333px;top:695.43px">DATDI2426</div>
<div class="a" style="left:466px;top:691.13px;width:135px;height:16.87px;background:#fff"></div>
<div class="cell" style="left:469px;top:695.43px;color:#17676b">Table</div>
<div class="a" style="left:602px;top:691.13px;width:135px;height:16.87px;background:#fff"></div>
<div class="cell" style="left:605px;top:695.43px">DATDI2426</div>
<div class="a" style="left:738px;top:691.13px;width:135px;height:16.87px;background:#fff"></div>
<div class="cell" style="left:741px;top:695.43px">Table</div>
<div class="a" style="left:874px;top:691.13px;width:135px;height:16.87px;background:#fff"></div>
<div class="fl" style="right:17px;top:695.13px">FALSE</div>
</body></html>
